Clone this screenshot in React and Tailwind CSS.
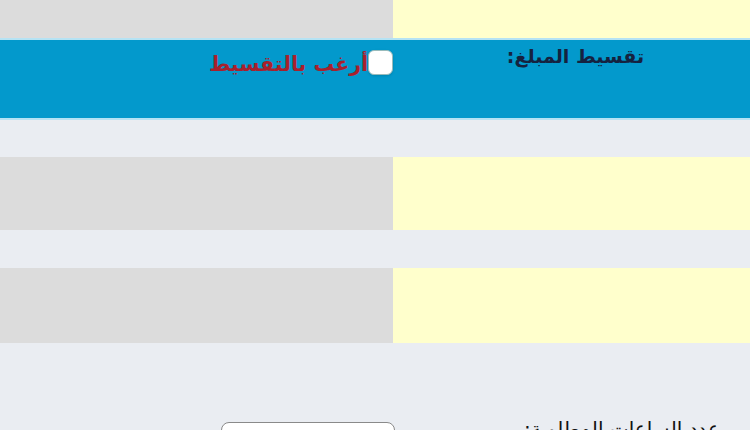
import React from "react";

const font = { fontFamily: '"DejaVu Sans", "Noto Sans", sans-serif' };

const FieldRow = ({ height }) => (
  <div className={`flex ${height}`}>
    <div className="w-[357px] bg-[#ffffcc]" />
    <div className="flex-1 bg-[#dcdcdc]" />
  </div>
);

export default function App() {
  return (
    <div dir="rtl" className="w-[750px] h-[430px] overflow-hidden bg-[#eaedf2]" style={font}>
      <FieldRow height="h-[38px]" />

      {/* installment row */}
      <div className="flex h-[82px] bg-[#0399cc] border-y-2 border-[#b5e3f4]">
        <div className="w-[357px] flex justify-center pt-[4px]">
          <span className="text-[19px] font-bold text-[#15223f] leading-6 pl-[8px]">تقسيط المبلغ:</span>
        </div>
        <div className="flex-1 flex items-start pt-[7px]">
          <label className="flex items-center">
            <input
              type="checkbox"
              className="appearance-none w-[25px] h-[25px] bg-white rounded-md border border-[#9bb] shadow-sm"
            />
            <span className="text-[20.5px] font-bold text-[#a8202c] leading-7 mt-[3px]">أرغب بالتقسيط</span>
          </label>
        </div>
      </div>

      <div className="h-[37px]" />
      <FieldRow height="h-[73px]" />
      <div className="h-[38px]" />
      <FieldRow height="h-[75px]" />

      <div className="flex items-start pt-[74px]">
        <div className="w-[355px] pr-[30px]">
          <span className="text-[20px] text-[#111] leading-6">عدد الساعات المطلوبة:</span>
        </div>
        <div className="flex-1 pt-[5px]">
          <input
            type="text"
            className="w-[174px] h-[32px] bg-white rounded-lg border border-[#8a8a8a]"
          />
        </div>
      </div>
    </div>
  );
}
